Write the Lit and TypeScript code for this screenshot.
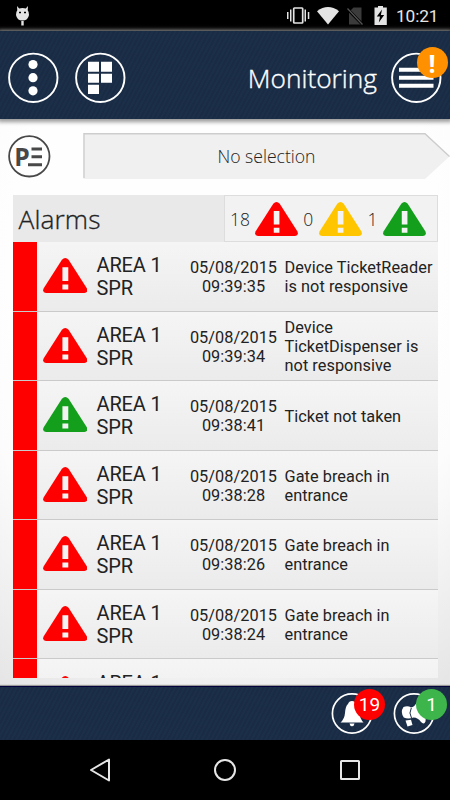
import { LitElement, html, css, svg } from "lit";
import { customElement, property } from "lit/decorators.js";
import { classMap } from "lit/directives/class-map.js";

@customElement("warn-icon")
class WarnIcon extends LitElement {
  @property() tone = "red";
  static styles = css`
    :host { display: block; }
    svg { display: block; width: 100%; height: 100%; }
    .red { fill: #ff0000; }
    .yellow { fill: #ffc600; }
    .green { fill: #139f1b; }
    .mark { fill: #f3f3f3; }
  `;
  render() {
    return html`<svg viewBox="0 0 44 35" preserveAspectRatio="none">
      <path class=${this.tone} d="M18.700 1.800Q22 -1.600 25.300 1.800L43.300 30.200Q45.200 34.300 41 35H3Q-1.200 34.300 .7 30.200Z"/>
      <path class="mark" d="M19.200 9.300h5.800v13.800h-5.800zM19.200 26.400h5.800v5.200h-5.800z"/>
    </svg>`;
  }
}

interface Alarm { time: string; text: string[]; tone: string }

@customElement("app-root")
class AppRoot extends LitElement {
  static styles = css`
    :host { display: flex; flex-direction: column; width: 450px; height: 800px; overflow: hidden; background: #000; font-family: Roboto, sans-serif; color: #222; }
    svg { display: block; }
    .status { height: 31px; flex: none; background: #000; }
    .status text { font: 400 17.300px Roboto, sans-serif; fill: #e6e6e6; }
    .navy { background: repeating-linear-gradient(118deg, #1a2c45 0 2px, #1c2f49 2px 4px); }
    .header { height: 87.500px; flex: none; display: flex; align-items: center; padding: 6px 8px 0 8px; box-sizing: border-box; gap: 16px; position: relative; z-index: 1; box-shadow: 0 1px 4px 2px #999; }
    .title { font: 300 26.300px/36px "Open Sans", sans-serif; color: #fff; -webkit-text-stroke: .35px #fff; margin-left: auto; white-space: nowrap; }
    .header .wrap { margin-left: -2px; }
    .wrap { position: relative; }
    .badge { position: absolute; width: 31px; height: 31px; border-radius: 50%; display: flex; align-items: center; justify-content: center; color: #fff; }
    .orange { background: #ff9100; left: 25.500px; top: -5px; font: 700 25px "Open Sans", sans-serif; }
    .content { flex: 1; min-height: 0; display: flex; flex-direction: column; background: radial-gradient(ellipse 390px 480px at 50% 24%, #fefefe 55%, #fcfcfc 70%, #dedede 118%); padding: 0 0 8px 0; box-sizing: border-box; }
    .pick { height: 76.500px; flex: none; display: flex; padding: 14px 0 0 8px; box-sizing: border-box; }
    .logo text { font: 700 25px "Open Sans", sans-serif; fill: #484848; }
    .select { margin-left: 32px; width: 367px; height: 48px; display: grid; }
    .select > * { grid-area: 1 / 1; }
    .select span { font: 300 17.600px/46px "Open Sans", sans-serif; text-align: center; color: #222; }
    .panel { margin: 0 12px 0 12.500px; flex: 1; min-height: 0; overflow: hidden; background: #f3f3f3; }
    .head { height: 47px; display: flex; background: #e9e9e9; }
    .name { width: 211.500px; font: 300 26.300px/48px "Open Sans", sans-serif; color: #222; -webkit-text-stroke: .3px #222; padding-left: 6px; box-sizing: border-box; letter-spacing: .1px; }
    .counts { flex: 1; display: flex; align-items: center; background: #f2f2f2; border: 1px solid #ddd; box-sizing: border-box; padding-left: 5px; }
    .counts span { font: 300 17.500px/46px "Open Sans", sans-serif; color: #222; width: 24.500px; }
    .counts span.short { width: 15.500px; margin-left: 5.700px; }
    .counts warn-icon { width: 43px; height: 34px; }
    .row { height: 69.550px; display: flex; align-items: center; box-sizing: border-box; border-bottom: 1px solid #cacaca; background: linear-gradient(#f5f5f5, #ebebeb); }
    .bar { width: 24.500px; align-self: stretch; background: #ff0000; margin-right: 5.500px; }
    .row warn-icon { width: 44.500px; height: 35px; margin-bottom: 1px; }
    .area { width: 98px; padding: 2px 0 0 9.500px; box-sizing: border-box; font-size: 20px; line-height: 23px; letter-spacing: -.15px; }
    .date { width: 97px; text-align: center; font-size: 16.300px; line-height: 19px; padding-top: 2px; letter-spacing: .05px; }
    .text { font-size: 16.300px; line-height: 19px; white-space: nowrap; padding-left: 2.500px; padding-top: 2px; letter-spacing: .05px; }
    .footer { height: 54px; flex: none; display: flex; gap: 20px; justify-content: flex-end; padding: 6px 15px 0 0; box-sizing: border-box; border-top: 1px solid #04043c; box-shadow: 0 -1px 1px #999; position: relative; }
    .count { left: 23px; top: -4.500px; font: 400 19px Roboto, sans-serif; }
    .is-red { background: #ff0000; }
    .is-green { background: #3eb54a; }
    .nav { height: 60px; flex: none; }
  `;

  alarms: Alarm[] = [
    { time: "09:39:35", text: ["Device TicketReader", "is not responsive"], tone: "red" },
    { time: "09:39:34", text: ["Device", "TicketDispenser is", "not responsive"], tone: "red" },
    { time: "09:38:41", text: ["Ticket not taken"], tone: "green" },
    { time: "09:38:28", text: ["Gate breach in", "entrance"], tone: "red" },
    { time: "09:38:26", text: ["Gate breach in", "entrance"], tone: "red" },
    { time: "09:38:24", text: ["Gate breach in", "entrance"], tone: "red" },
    { time: "", text: [], tone: "red" },
  ];

  ring(content: unknown) {
    return html`<svg width="51" height="51" viewBox="0 0 51 51"><circle cx="25.300" cy="25.800" r="24.200" fill="none" stroke="#fff" stroke-width="1.900"/>${content}</svg>`;
  }

  badge(label: string, tone: string, glyph: unknown) {
    return html`<div class="wrap">
      <svg width="42" height="42" viewBox="0 0 42 42"><circle cx="21" cy="20.500" r="19.600" fill="none" stroke="#fff" stroke-width="1.700"/>${glyph}</svg>
      <div class=${classMap({ badge: true, count: true, [tone]: true })}>${label}</div>
    </div>`;
  }

  render() {
    return html`
      <div class="status"><svg width="450" height="31" viewBox="0 0 450 31">
        <g fill="#e4e4e4">
          <path d="M17 6l2.200 2.500Q22.500 7.300 25.800 8.500L28 6l-.3 4.300Q29.300 12.300 29 15Q28 20.500 22.500 20.500T16 15Q15.700 12.300 17.300 10.300ZM21.300 21h2.400v4.600h-2.400z"/>
          <path d="M287 12h1.500v7H287zM290 9.500h1.500v12H290zM304.500 9.500h1.500v12h-1.500zM307.800 12h1.500v7h-1.500z"/>
          <path d="M317 11.200Q328 3 339 11.200L328 24.500Z"/>
          <path d="M374.500 7.500h3.500V6h5v1.500h3.800V25h-12.300V7.500z"/>
        </g>
        <path d="M19 12.500h2M24 12.500h2" stroke="#000" stroke-width="1.300"/>
        <rect x="293.700" y="8" width="9" height="15" rx=".7" fill="none" stroke="#e4e4e4" stroke-width="1.700"/>
        <path d="M353.500 7.500H361.500V24.500H349V12Z" fill="#3b3b3b"/>
        <path d="M347.500 9L362 24" stroke="#000" stroke-width="3"/><path d="M347.500 8.500L362.500 24.500" stroke="#555" stroke-width="1.200"/>
        <path d="M382 9.500L376.800 16.500H380L378.800 22.500L384.200 15H380.900Z" fill="#000"/>
        <text x="396" y="22.300" textLength="42.500">10:21</text>
      </svg></div>

      <div class="header navy">
        ${this.ring(svg`<g fill="#fff"><circle cx="25" cy="12.500" r="4.600"/><circle cx="25" cy="25.700" r="4.600"/><circle cx="25" cy="38.800" r="4.600"/></g>`)}
        ${this.ring(svg`<path fill="#fff" d="M13 9.700h11v10H13zM26 9.700h11v10h-11zM13 21.700h11v9H13zM26 21.700h11v9h-11zM13 32.700h11v9.200H13z"/>`)}
        <span class="title">Monitoring</span>
        <div class="wrap">
          ${this.ring(svg`<path fill="#fff" d="M8 15.700h34.500v4H8zM8 23.700h34.500v4H8zM8 31.800h34.500v4H8z"/>`)}
          <div class="badge orange">!</div>
        </div>
      </div>

      <div class="content">
        <div class="pick">
          <svg class="logo" width="43" height="46" viewBox="0 0 43 46">
            <circle cx="21.300" cy="23.300" r="20.200" fill="none" stroke="#484848" stroke-width="1.800"/>
            <text x="6.300" y="32.800" textLength="15.500" lengthAdjust="spacingAndGlyphs">P</text>
            <path fill="#484848" d="M23.500 14.600h10.500v3H23.500zM23.500 22.300h10.500v3H23.500zM20 30.200h14v3H20z"/>
          </svg>
          <div class="select">
            <svg width="367" height="48" viewBox="0 0 367 48">
              <path d="M.5 0H342L366.500 23.500L342 46H.5Z" fill="#f0f0f0"/>
              <path d="M1 45V.7H342L366.500 23.500" fill="none" stroke="#cdcdcd" stroke-width="1.400"/>
            </svg>
            <span>No selection</span>
          </div>
        </div>
        <div class="panel">
          <div class="head">
            <div class="name">Alarms</div>
            <div class="counts">
              <span>18</span><warn-icon tone="red"></warn-icon>
              <span class="short">0</span><warn-icon tone="yellow"></warn-icon>
              <span class="short">1</span><warn-icon tone="green"></warn-icon>
            </div>
          </div>
          ${this.alarms.map(a => html`<div class="row">
            <div class="bar"></div>
            <warn-icon tone=${a.tone}></warn-icon>
            <div class="area">AREA 1<br>SPR</div>
            <div class="date">${a.time ? html`05/08/2015<br>${a.time}` : ""}</div>
            <div class="text">${a.text.map(t => html`<div>${t}</div>`)}</div>
          </div>`)}
        </div>
      </div>

      <div class="footer navy">
        ${this.badge("19", "is-red", svg`<path fill="#fff" d="M21 8Q24 8 25 11Q28 13 28.500 20Q29 26 32.500 29.500H9.500Q13.500 26 14 20Q14.500 13 17 11Q18 8 21 8ZM18.500 30.500h5Q23 33.200 21 33.200T18.500 30.500Z"/>`)}
        ${this.badge("1", "is-green", svg`<path fill="#fff" d="M10.500 14Q15 12.500 18 14.500Q21.500 14 24 9L31 9Q33.500 22 32.500 28.500Q31 32 28 29Q25 24.500 20.500 24.500Q15 26.500 10.800 24.500Q7 19 10.500 14ZM12.500 27.500L18 26.800L19.500 32L14.500 33.500Z"/><path d="M18.300 15Q15.500 20 18.500 25" stroke="#1c2e49" stroke-width="1" fill="none"/>`)}
      </div>
      <div class="nav"><svg width="450" height="60" viewBox="0 0 450 60" fill="none" stroke="#e6e6e6" stroke-width="2">
        <path d="M109 19.500V40.500L91 30Z" stroke-linejoin="round"/><circle cx="225" cy="30" r="10"/><rect x="341" y="21" width="18" height="18" rx=".5"/>
      </svg></div>
    `;
  }
}
